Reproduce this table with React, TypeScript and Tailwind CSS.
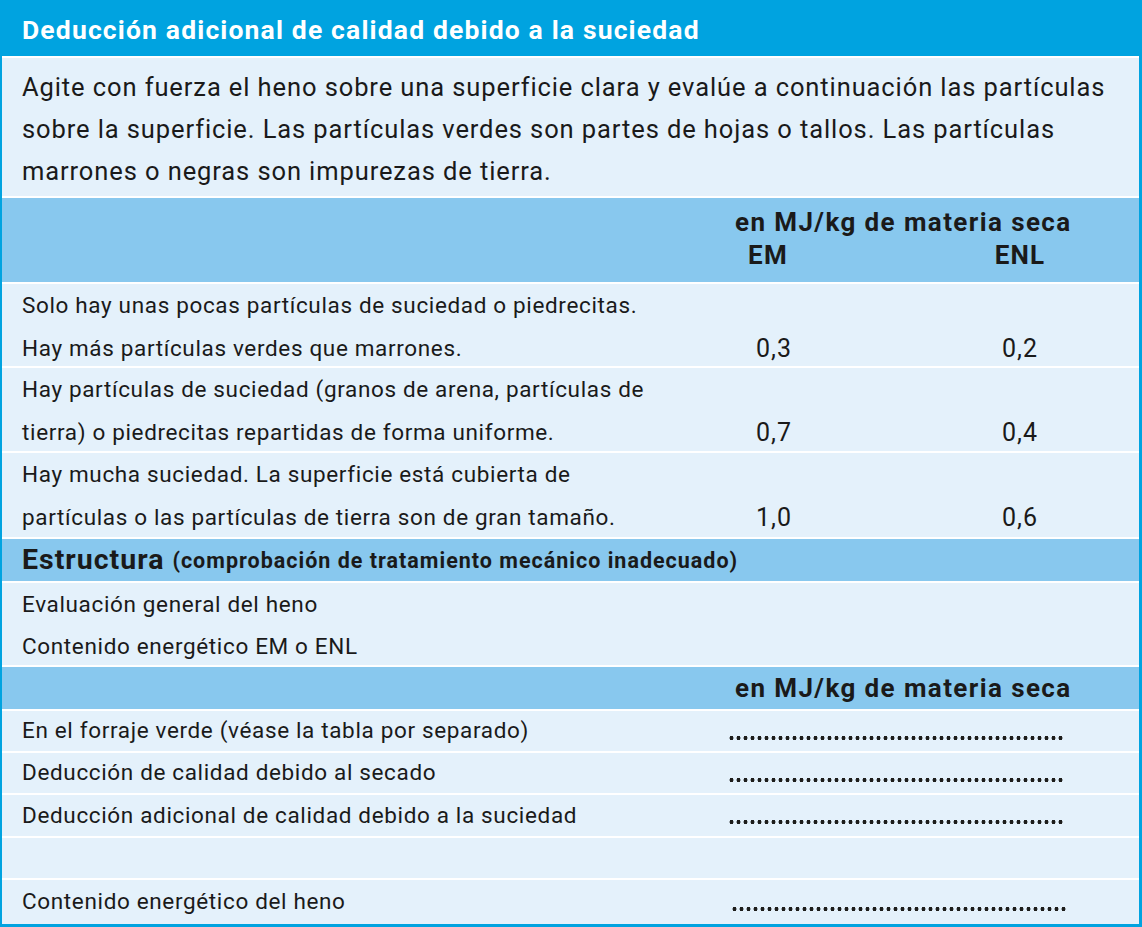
import React from "react";

const Dots = ({ className = "" }: { className?: string }) => (
  <div
    className={
      "h-[4px] w-[336px] bg-[radial-gradient(circle,#1d1d1b_1.8px,transparent_2.2px)] bg-[length:7px_4px] bg-repeat-x " +
      className
    }
  />
);

function TwoLineRow({
  a,
  b,
  em,
  enl,
  h,
}: {
  a: string;
  b: string;
  em: string;
  enl: string;
  h: string;
}) {
  return (
    <div className={"grid grid-cols-[698px_148px_92px_160px] bg-[#e4f1fb] text-[22.5px] tracking-[0.65px] leading-[43px] " + h}>
      <div className="pl-[20px]">
        <div>{a}</div>
        <div>{b}</div>
      </div>
      <div className="pt-[43px] text-center text-[25px] tracking-[1px]">{em}</div>
      <div />
      <div className="pt-[43px] text-center text-[25px] tracking-[1px]">{enl}</div>
    </div>
  );
}

function DotRow({ label, h, shift = "" }: { label: string; h: string; shift?: string }) {
  return (
    <div className={"flex items-center bg-[#e4f1fb] text-[22.5px] tracking-[0.65px] " + h}>
      <div className="w-[726px] pl-[20px]">{label}</div>
      <Dots className={"mt-[13px] " + shift} />
    </div>
  );
}

export default function App() {
  return (
    <div className="w-[1142px] h-[927px] bg-[#00a3e0] flex flex-col font-[Roboto,sans-serif] text-[#1a1a1a]">
      <div className="h-[56px] flex items-center pl-[22px] pt-[3px] text-white font-bold text-[26.5px] tracking-[1.15px] shrink-0">
        Deducción adicional de calidad debido a la suciedad
      </div>
      <div className="ml-[2px] mr-[3px] bg-white flex flex-col gap-[2px] pt-[2px] h-[868px]">
        <div className="h-[138px] bg-[#e4f1fb] pl-[20px] pt-[8px] text-[25.5px] tracking-[0.9px] leading-[42px]">
          <div>Agite con fuerza el heno sobre una superficie clara y evalúe a continuación las partículas</div>
          <div>sobre la superficie. Las partículas verdes son partes de hojas o tallos. Las partículas</div>
          <div>marrones o negras son impurezas de tierra.</div>
        </div>
        <div className="h-[84px] bg-[#88c8ee] font-bold text-[26px] leading-[33px] pt-[8px]">
          <div className="pl-[733px] tracking-[1.4px]">en MJ/kg de materia seca</div>
          <div className="grid grid-cols-[698px_136px_104px_160px] tracking-[1.2px]">
            <div />
            <div className="text-center">EM</div>
            <div />
            <div className="text-center">ENL</div>
          </div>
        </div>
        <TwoLineRow
          h="h-[82px]"
          a="Solo hay unas pocas partículas de suciedad o piedrecitas."
          b="Hay más partículas verdes que marrones."
          em="0,3"
          enl="0,2"
        />
        <TwoLineRow
          h="h-[83px]"
          a="Hay partículas de suciedad (granos de arena, partículas de"
          b="tierra) o piedrecitas repartidas de forma uniforme."
          em="0,7"
          enl="0,4"
        />
        <TwoLineRow
          h="h-[84px]"
          a="Hay mucha suciedad. La superficie está cubierta de"
          b="partículas o las partículas de tierra son de gran tamaño."
          em="1,0"
          enl="0,6"
        />
        <div className="h-[42px] bg-[#88c8ee] flex items-center pl-[20px] font-bold">
          <span className="text-[28.5px] tracking-[1px]">Estructura</span>
          <span className="text-[21.5px] tracking-[1px] ml-[8px] mt-[2px]">(comprobación de tratamiento mecánico inadecuado)</span>
        </div>
        <div className="h-[82px] bg-[#e4f1fb] pl-[20px] text-[22.5px] tracking-[0.65px] leading-[42px]">
          <div>Evaluación general del heno</div>
          <div>Contenido energético EM o ENL</div>
        </div>
        <div className="h-[42px] bg-[#88c8ee] flex items-center pl-[733px] font-bold text-[26px] tracking-[1.4px]">
          en MJ/kg de materia seca
        </div>
        <DotRow h="h-[40px]" label="En el forraje verde (véase la tabla por separado)" />
        <DotRow h="h-[40px]" label="Deducción de calidad debido al secado" />
        <DotRow h="h-[41px]" label="Deducción adicional de calidad debido a la suciedad" />
        <div className="h-[40px] bg-[#e4f1fb]" />
        <DotRow h="h-[44px]" label="Contenido energético del heno" shift="ml-[3px]" />
      </div>
    </div>
  );
}
